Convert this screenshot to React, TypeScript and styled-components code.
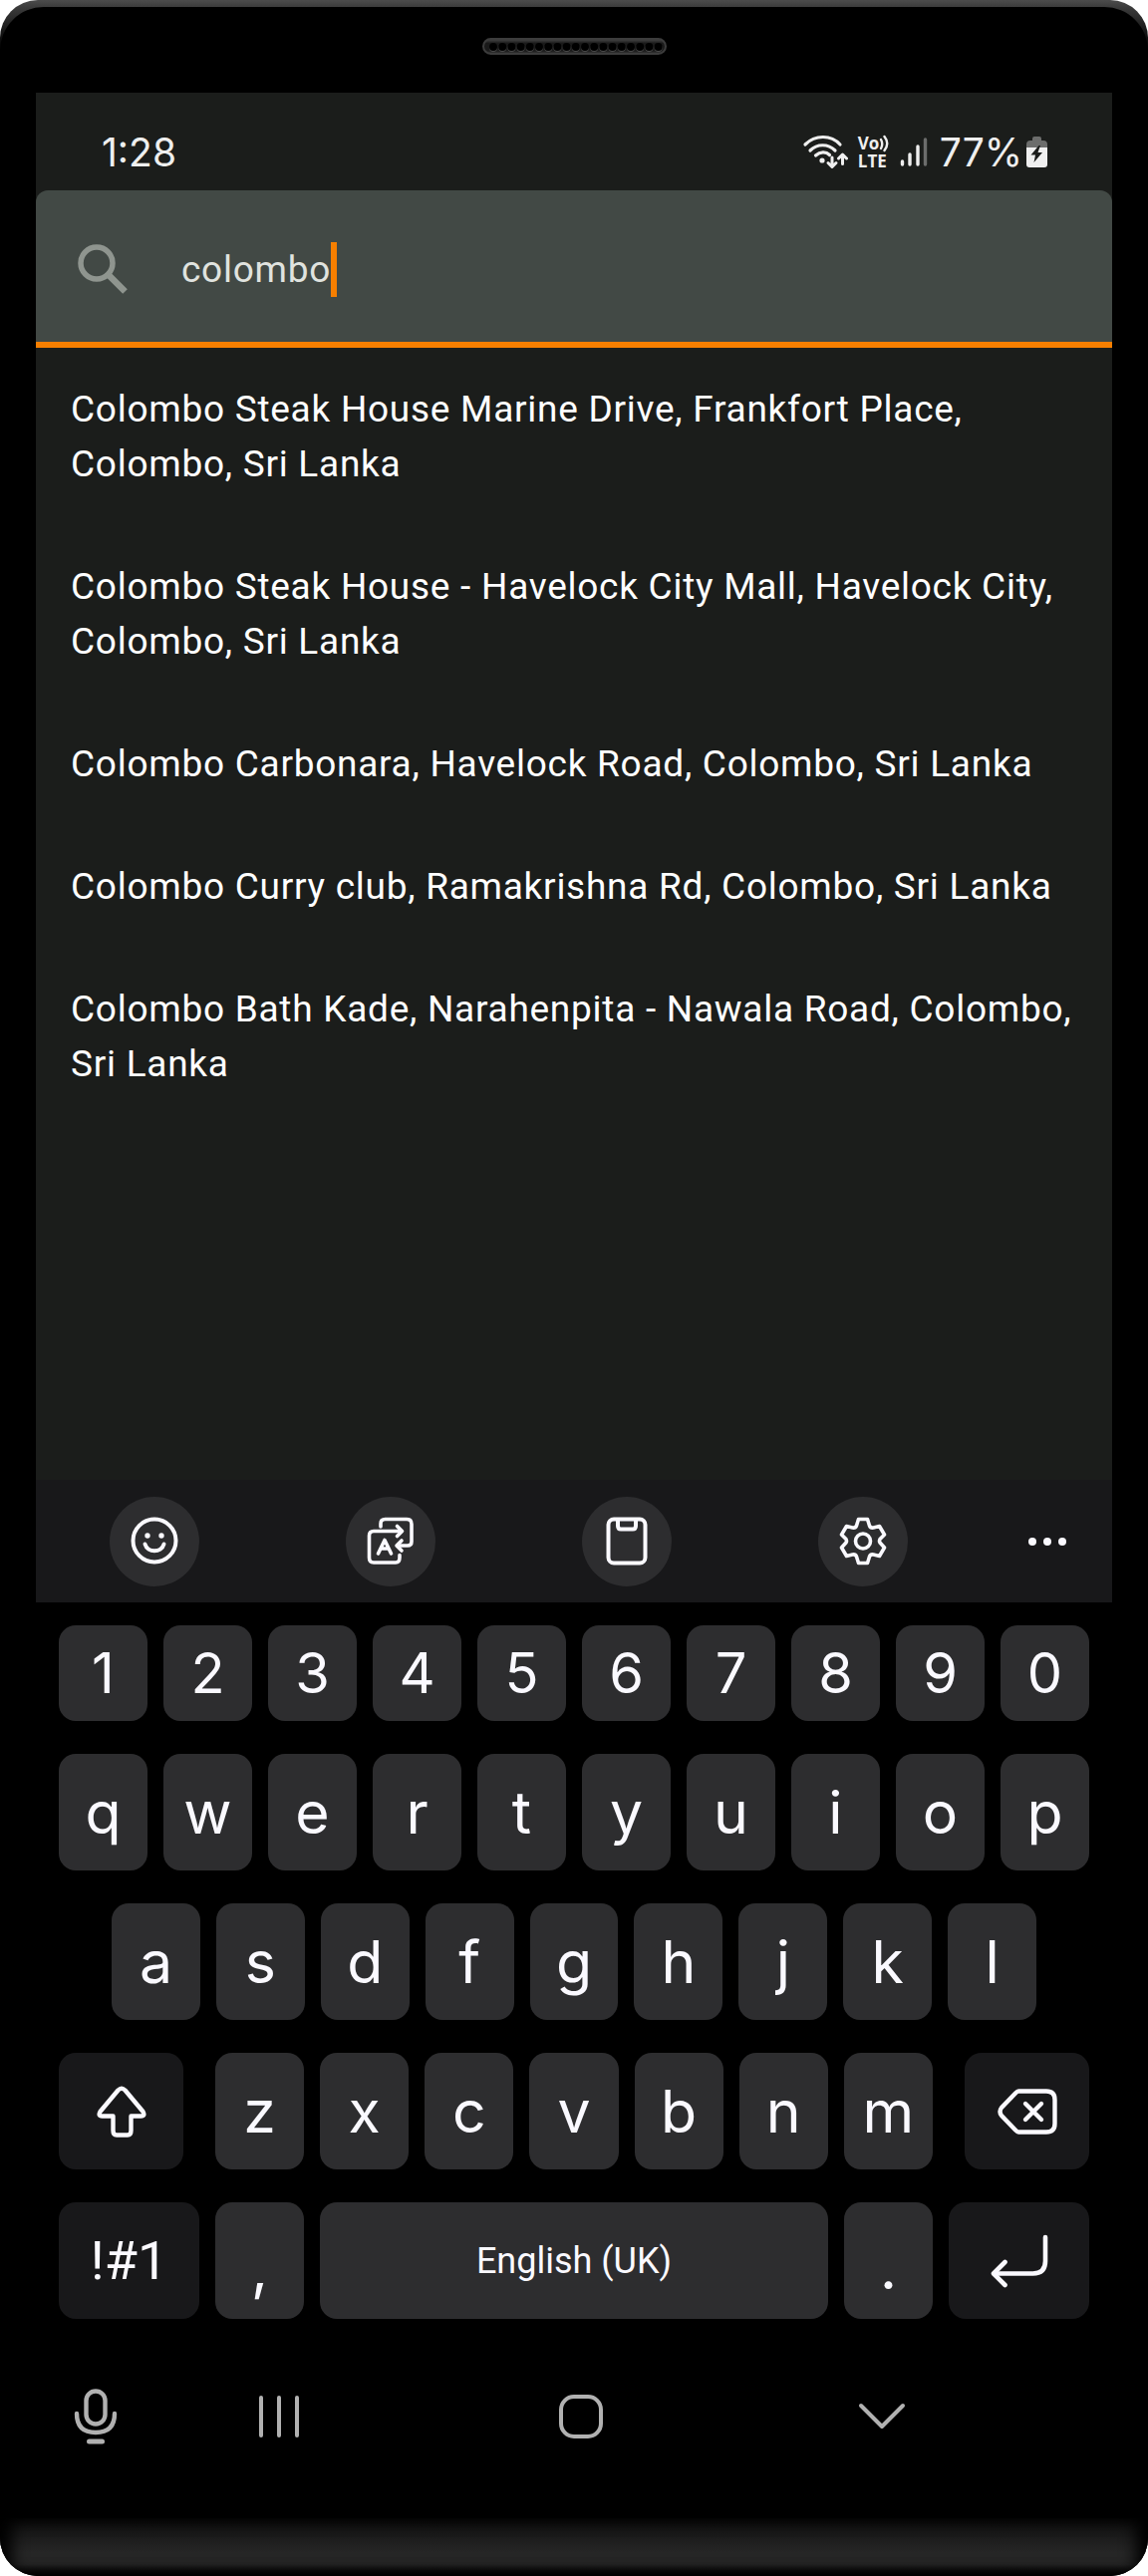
import React from "react";
import styled, { createGlobalStyle } from "styled-components";

const GlobalStyle = createGlobalStyle`
  * { box-sizing: border-box; }
  body { margin: 0; background: #fff; }
  button, input { font: inherit; color: inherit; border: 0; padding: 0; margin: 0; background: none; outline: none; }
  svg { display: block; }
`;

const Phone = styled.div`
  background: linear-gradient(#4c4c4c, #3c3c3c 7px, #101010 36px, #000 60px);
  border-radius: 38px;
  overflow: hidden;
  padding-top: 7px;
`;

const Body = styled.div`
  background: #000;
  border-radius: 44px 44px 0 0;
  padding: 31px 36px 32px;
`;

const Speaker = styled.svg`
  margin: 0 auto 38px;
`;

const Chin = styled.div`
  height: 58px;
  background: linear-gradient(#0f0f0f, #262626 60%, #262626 80%, #000);
  box-shadow: inset 12px 0 16px #000, inset -12px 0 16px #000;
`;

const Screen = styled.main`
  background: #1b1d1b;
  font-family: Roboto, "Liberation Sans", sans-serif;
  color: #fff;
`;

const StatusBar = styled.header`
  height: 98px;
  padding: 22px 65px 0 66px;
  display: flex;
  align-items: center;
  justify-content: space-between;
  font-family: Inter, Roboto, sans-serif;
  font-size: 39px;
  line-height: 48px;
  color: #efefef;
`;

const StatusIcons = styled.div`
  display: flex;
  align-items: center;
`;

const Radios = styled.div`
  display: flex;
  align-items: center;
  gap: 10px;
`;

const Percent = styled.span`
  margin: 0 4px 0 12px;
`;

const VoLte = styled.span`
  display: flex;
  flex-direction: column;
  width: 32px;
  font-family: "Open Sans", sans-serif;
  font-size: 17px;
  font-weight: 700;
  line-height: 18px;
`;

const VoLine = styled.span`
  display: flex;
  align-items: center;
`;

const SearchBar = styled.label`
  display: flex;
  align-items: center;
  height: 158px;
  padding: 0 40px;
  background: #424945;
  box-shadow: inset 0 -6px #f77f00;
  border-radius: 12px 12px 0 0;
`;

const SearchInput = styled.input`
  field-sizing: content;
  margin-left: 52px;
  height: 55px;
  font-size: 37px;
  letter-spacing: 0.02em;
  color: #e0e3df;
  caret-color: transparent;
`;

const Caret = styled.span`
  width: 6px;
  height: 55px;
  background: #f77f00;
`;

const Results = styled.ul`
  list-style: none;
  margin: 0;
  padding: 0 35px;
  min-height: 1136px;
`;

const Result = styled.li`
  padding: 34px 0;
  font-size: 37px;
  line-height: 55px;
  letter-spacing: 0.02em;
`;

const Keyboard = styled.section`
  background: #000;
  color: #faf9ff;
`;

const Tools = styled.div`
  display: grid;
  grid-template-columns: repeat(4, 29fr) 16fr;
  place-items: center;
  height: 123px;
  background: #18181a;
`;

const Tool = styled.button<{ $plain?: boolean }>`
  display: grid;
  place-items: center;
  width: 90px;
  height: 90px;
  border-radius: 50%;
  background: ${(p) => (p.$plain ? "none" : "#2d2d2f")};
`;

const Keys = styled.div`
  display: flex;
  flex-direction: column;
  gap: 33px;
  padding: 23px 23px 0;
`;

const Row = styled.div<{ $inset?: boolean }>`
  display: flex;
  gap: 16px;
  padding: ${(p) => (p.$inset ? "0 53px" : "0")};
`;

const Letters = styled.div`
  display: flex;
  flex: 1;
  gap: 16px;
  margin: 0 16px;
`;

const Key = styled.button<{ $number?: boolean; $dark?: boolean; $width?: number }>`
  flex: ${(p) => (p.$width ? `0 0 ${p.$width}px` : "1 1 0")};
  min-width: 0;
  height: ${(p) => (p.$number ? 96 : 117)}px;
  display: flex;
  align-items: center;
  justify-content: center;
  border-radius: 17px;
  background: ${(p) => (p.$dark ? "#18181a" : "#2d2d2f")};
  font-family: Inter, Roboto, sans-serif;
  font-size: ${(p) => (p.$number ? 56 : 59)}px;
  line-height: 72px;
`;

const SymbolLabel = styled.span`
  font-family: Roboto, sans-serif;
  font-size: 54px;
`;

const SpaceLabel = styled.span`
  font-family: Roboto, sans-serif;
  font-size: 36px;
`;

const PunctuationLabel = styled.span`
  padding-top: 14px;
`;

const NavBar = styled.nav`
  display: grid;
  grid-template-columns: 119fr 250fr 355fr 250fr 106fr;
  height: 140px;
  margin-top: 28px;
  color: #b1b1b1;
`;

const NavButton = styled.button`
  display: grid;
  place-items: center;
`;

const stroke = {
  fill: "none",
  stroke: "currentColor",
  strokeLinecap: "round" as const,
  strokeLinejoin: "round" as const,
};

const WifiIcon = () => (
  <svg width="46" height="36" viewBox="0 0 46 36" {...stroke} strokeWidth="3.2">
    <path d="M3 10 C13 0 29 0 38 10" />
    <path d="M8 16 C15 9 26 9 33 16" />
    <path d="M13.500 21 C18 17 24 17 27.500 20.500" />
    <circle cx="20" cy="26" r="2.600" fill="currentColor" stroke="none" />
    <path d="M30 23 V32 M26 28.500 L30 32.500 L34 28.500" strokeWidth="3" />
    <path d="M40.500 29.500 V20.500 M36.500 24 L40.500 20 L44.500 24" strokeWidth="3" />
  </svg>
);

const WavesIcon = () => (
  <svg width="10" height="18" viewBox="0 0 10 18" {...stroke} strokeWidth="2.4">
    <path d="M2 5 Q4.500 9.500 2 14 M5.500 2 Q11 9 5.500 16" />
  </svg>
);

const SignalIcon = () => (
  <svg width="28" height="30" viewBox="0 0 28 30" {...stroke} strokeWidth="3.4">
    <path d="M2.500 24 V27 M10 17 V27 M18 9 V27" />
    <path d="M25.500 2 V27" stroke="#6c6d6c" />
  </svg>
);

const BatteryIcon = () => (
  <svg width="21" height="32" viewBox="0 0 21 32">
    <path d="M6 2 Q6 0 8 0 H13 Q15 0 15 2 V4 H17 Q21 4 21 8 V12 H0 V8 Q0 4 4 4 H6 Z" fill="#6c6d6c" />
    <path d="M0 11 H21 V28 Q21 31 18 31 H3 Q0 31 0 28 Z" fill="#efefef" />
    <path d="M12.500 9 L4.500 18.500 H9 L7.500 26 L16 16 H11.500 L14 9 Z" fill="#1b1d1b" />
  </svg>
);

const SearchIcon = () => (
  <svg width="54" height="54" viewBox="0 0 54 54" fill="none" stroke="#8f958f">
    <circle cx="21" cy="21" r="16" strokeWidth="5.500" />
    <path d="M32 32 L49.500 49.500" strokeWidth="6.500" />
  </svg>
);

const EmojiIcon = () => (
  <svg width="48" height="52" viewBox="0 0 48 52" {...stroke} strokeWidth="4">
    <circle cx="24" cy="25" r="21.500" />
    <path d="M14.500 28.500 C17 37.500 31 37.500 33.500 28.500" />
    <circle cx="17" cy="20" r="2.700" fill="currentColor" stroke="none" />
    <circle cx="31" cy="20" r="2.700" fill="currentColor" stroke="none" />
  </svg>
);

const TranslateIcon = () => (
  <svg width="48" height="50" viewBox="0 0 48 50" {...stroke} strokeWidth="3.600">
    <path d="M14 10 V7 Q14 2.500 18.500 2.500 H40 Q45 2.500 45 7.500 V25 Q45 29 41 29 H31" />
    <path d="M35 24 L30 29 L35 34" />
    <path d="M34 14.500 H7 Q2.500 14.500 2.500 19 V41 Q2.500 46 7 46 H29 Q33 46 33 41 V38.500" />
    <path d="M30.500 9.500 L35.500 14.500 L30.500 19.500" />
    <path d="M11.500 37 L18 23.500 L24.500 37 M14 32 H22" />
  </svg>
);

const ClipboardIcon = () => (
  <svg width="42" height="50" viewBox="0 0 42 50" {...stroke} strokeWidth="4">
    <rect x="2.500" y="2.500" width="37" height="44" rx="5.500" />
    <path d="M12 3 V9 Q12 12.500 15 12.500 H27 Q30 12.500 30 9 V3" />
  </svg>
);

const GearIcon = () => (
  <svg width="48" height="50" viewBox="0 0 48 50" {...stroke} strokeWidth="3.600">
    <path d="M19.500 2.500 H28.500 L30.500 9 Q31.500 11.500 34.500 11 L40.500 9.500 L45.500 18 L41 22.500 Q40 24.500 41 26 L45.500 31 L40.500 39.500 L34.500 38 Q31.500 37.500 30.500 40 L28.500 46.500 H19.500 L17.500 40 Q16.500 37.500 13.500 38 L7.500 39.500 L2.500 31 L7 26 Q8 24.500 7 22.500 L2.500 18 L7.500 9.500 L13.500 11 Q16.500 11.500 17.500 9 Z" />
    <circle cx="24" cy="24.500" r="7.500" />
  </svg>
);

const MoreIcon = () => (
  <svg width="40" height="8" viewBox="0 0 40 8" fill="currentColor">
    <circle cx="5" cy="4" r="4" />
    <circle cx="20" cy="4" r="4" />
    <circle cx="35" cy="4" r="4" />
  </svg>
);

const ShiftIcon = () => (
  <svg width="50" height="52" viewBox="0 0 50 52" {...stroke} strokeWidth="4.400">
    <path d="M21.500 4.500 Q25 1 28.500 4.500 L46.500 26 Q49 30.500 44.500 30.500 H34.500 V45 Q34.500 49.500 31 49.500 H20 Q16.500 49.500 16.500 45 V30.500 H5.500 Q1 30.500 3.500 26 Z" />
  </svg>
);

const BackspaceIcon = () => (
  <svg width="60" height="46" viewBox="0 0 60 46" {...stroke} strokeWidth="4.400">
    <path d="M21 2.500 H49 Q57.500 2.500 57.500 11 V35 Q57.500 43.500 49 43.500 H21 Q20 43.500 18 41.500 L4 27 Q1 23 4 19 L18 4.500 Q20 2.500 21 2.500 Z" />
    <path d="M28 15 L44 31 M44 15 L28 31" />
  </svg>
);

const EnterIcon = () => (
  <svg width="58" height="54" viewBox="0 0 58 54" {...stroke} strokeWidth="4.600">
    <path d="M55 3 V27 Q55 39.500 42.500 39.500 H4" />
    <path d="M14.500 28 L3 39.500 L14.500 51" />
  </svg>
);

const MicIcon = () => (
  <svg width="44" height="56" viewBox="0 0 44 56" {...stroke} strokeWidth="4.400">
    <rect x="12.500" y="2.500" width="19" height="33" rx="9.500" />
    <path d="M3 25 Q3 44 22 44 Q41 44 41 25" />
    <path d="M15.500 53 H28.500" strokeWidth="5" />
  </svg>
);

const RecentsIcon = () => (
  <svg width="42" height="44" viewBox="0 0 42 44" {...stroke} strokeWidth="4">
    <path d="M3 3 V41 M21 3 V41 M39 3 V41" />
  </svg>
);

const HomeIcon = () => (
  <svg width="46" height="46" viewBox="0 0 46 46" {...stroke} strokeWidth="4">
    <rect x="3" y="3" width="40" height="40" rx="13" />
  </svg>
);

const HideIcon = () => (
  <svg width="48" height="28" viewBox="0 0 48 28" {...stroke} strokeWidth="4">
    <path d="M3 3 L24 24 L45 3" />
  </svg>
);

const places = [
  "Colombo Steak House Marine Drive, Frankfort Place, Colombo, Sri Lanka",
  "Colombo Steak House - Havelock City Mall, Havelock City, Colombo, Sri Lanka",
  "Colombo Carbonara, Havelock Road, Colombo, Sri Lanka",
  "Colombo Curry club, Ramakrishna Rd, Colombo, Sri Lanka",
  "Colombo Bath Kade, Narahenpita - Nawala Road, Colombo, Sri Lanka",
];

const keysOf = (letters: string, number = false) =>
  letters.split("").map((k) => (
    <Key key={k} $number={number}>
      {k}
    </Key>
  ));

export default function App() {
  return (
    <>
      <GlobalStyle />
      <Phone>
        <Body>
          <Speaker width="185" height="17" viewBox="0 0 185 17">
            <defs>
              <linearGradient id="rim" x1="0" y1="0" x2="0" y2="1">
                <stop offset="0" stopColor="#4a4a4a" />
                <stop offset="0.3" stopColor="#1a1a1a" />
                <stop offset="0.8" stopColor="#1a1a1a" />
                <stop offset="1" stopColor="#3c3c3c" />
              </linearGradient>
            </defs>
            <rect x="1" y="1" width="183" height="15" rx="7.500" fill="url(#rim)" stroke="#3c3c3c" strokeWidth="2" />
            {Array.from({ length: 19 }, (_, i) => (
              <g key={i}>
                <circle cx={11 + i * 9.2} cy="10" r="4" fill="#4a4a4a" />
                <circle cx={11 + i * 9.2} cy="9" r="4" fill="#000" />
              </g>
            ))}
          </Speaker>
          <Screen>
            <StatusBar>
              <span>1:28</span>
              <StatusIcons>
                <Radios>
                  <WifiIcon />
                  <VoLte>
                    <VoLine>Vo<WavesIcon /></VoLine>
                    <span>LTE</span>
                  </VoLte>
                  <SignalIcon />
                </Radios>
                <Percent>77%</Percent>
                <BatteryIcon />
              </StatusIcons>
            </StatusBar>
            <SearchBar>
              <SearchIcon />
              <SearchInput type="text" aria-label="Search places" defaultValue="colombo" />
              <Caret />
            </SearchBar>
            <Results>
              {places.map((place) => (
                <Result key={place}>{place}</Result>
              ))}
            </Results>
            <Keyboard>
              <Tools>
                <Tool aria-label="Emoji"><EmojiIcon /></Tool>
                <Tool aria-label="Translate"><TranslateIcon /></Tool>
                <Tool aria-label="Clipboard"><ClipboardIcon /></Tool>
                <Tool aria-label="Settings"><GearIcon /></Tool>
                <Tool aria-label="More" $plain><MoreIcon /></Tool>
              </Tools>
              <Keys>
                <Row>{keysOf("1234567890", true)}</Row>
                <Row>{keysOf("qwertyuiop")}</Row>
                <Row $inset>{keysOf("asdfghjkl")}</Row>
                <Row>
                  <Key $dark $width={125} aria-label="Shift"><ShiftIcon /></Key>
                  <Letters>{keysOf("zxcvbnm")}</Letters>
                  <Key $dark $width={125} aria-label="Backspace"><BackspaceIcon /></Key>
                </Row>
                <Row>
                  <Key $dark $width={141}><SymbolLabel>!#1</SymbolLabel></Key>
                  <Key $width={89}><PunctuationLabel>,</PunctuationLabel></Key>
                  <Key><SpaceLabel>English (UK)</SpaceLabel></Key>
                  <Key $width={89}><PunctuationLabel>.</PunctuationLabel></Key>
                  <Key $dark $width={141} aria-label="Enter"><EnterIcon /></Key>
                </Row>
              </Keys>
              <NavBar>
                <NavButton aria-label="Voice input"><MicIcon /></NavButton>
                <NavButton aria-label="Recent apps"><RecentsIcon /></NavButton>
                <NavButton aria-label="Home"><HomeIcon /></NavButton>
                <NavButton aria-label="Hide keyboard"><HideIcon /></NavButton>
              </NavBar>
            </Keyboard>
          </Screen>
        </Body>
        <Chin />
      </Phone>
    </>
  );
}
